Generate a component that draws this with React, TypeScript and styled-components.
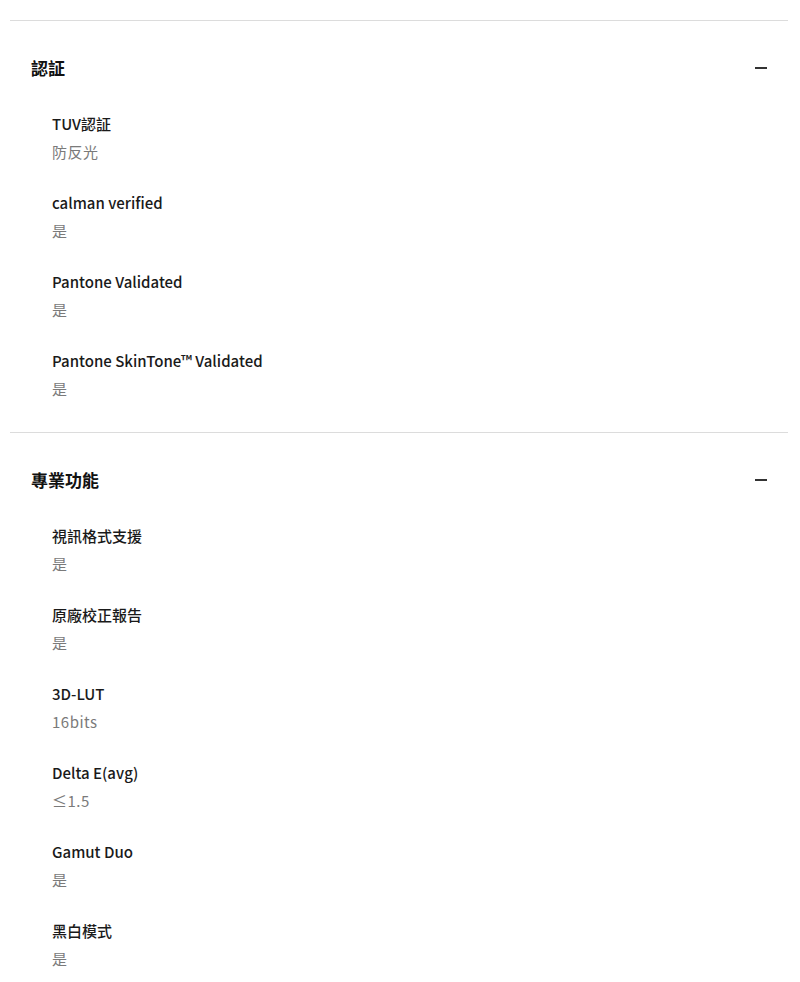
import React from 'react'
import styled, { createGlobalStyle } from 'styled-components'

const GlobalStyle = createGlobalStyle`
  body {
    margin: 0;
    background: #fff;
    font-family: "Noto Sans CJK TC", "Noto Sans", sans-serif;
  }
`

interface Spec {
  label: string;
  value: string;
}

interface Group {
  title: string;
  specs: Spec[];
}

const groups: Group[] = [
  {
    title: '認証',
    specs: [
      { label: 'TUV認証', value: '防反光' },
      { label: 'calman verified', value: '是' },
      { label: 'Pantone Validated', value: '是' },
      { label: 'Pantone SkinTone™ Validated', value: '是' },
    ],
  },
  {
    title: '專業功能',
    specs: [
      { label: '視訊格式支援', value: '是' },
      { label: '原廠校正報告', value: '是' },
      { label: '3D-LUT', value: '16bits' },
      { label: 'Delta E(avg)', value: '≤1.5' },
      { label: 'Gamut Duo', value: '是' },
      { label: '黑白模式', value: '是' },
    ],
  },
]

const App = () => {
  return (
    <>
      <GlobalStyle />
      <Page>
        {groups.map((group) => (
          <Section key={group.title}>
            <Header>
              <h2>{group.title}</h2>
              <Minus />
            </Header>
            <SpecList>
              {group.specs.map((spec) => (
                <SpecItem key={spec.label}>
                  <dt>{spec.label}</dt>
                  <dd>{spec.value}</dd>
                </SpecItem>
              ))}
            </SpecList>
          </Section>
        ))}
      </Page>
    </>
  )
}

const Page = styled.div`
  padding: 20px 12px 0 10px;
`

const Section = styled.section`
  border-top: 1px solid #dcdcdc;
  padding-bottom: 32px;
`

const Header = styled.div`
  display: flex;
  align-items: center;
  justify-content: space-between;
  padding: 35px 21px 0 21px;

  h2 {
    margin: 0;
    font-size: 17px;
    line-height: 24px;
    font-weight: 700;
    color: #111;
  }
`

const Minus = styled.span`
  display: block;
  width: 12px;
  height: 2px;
  background: #333;
`

const SpecList = styled.dl`
  display: flex;
  flex-direction: column;
  gap: 29px;
  margin: 33px 0 0;
  padding-left: 42px;
`

const SpecItem = styled.div`
  display: flex;
  flex-direction: column;
  gap: 6px;

  dt {
    font-size: 15px;
    line-height: 22px;
    font-weight: 500;
    color: #1a1a1a;
  }

  dd {
    margin: 0;
    font-size: 15px;
    line-height: 22px;
    letter-spacing: 0.5px;
    color: #7a7a7a;
  }
`

export default App
